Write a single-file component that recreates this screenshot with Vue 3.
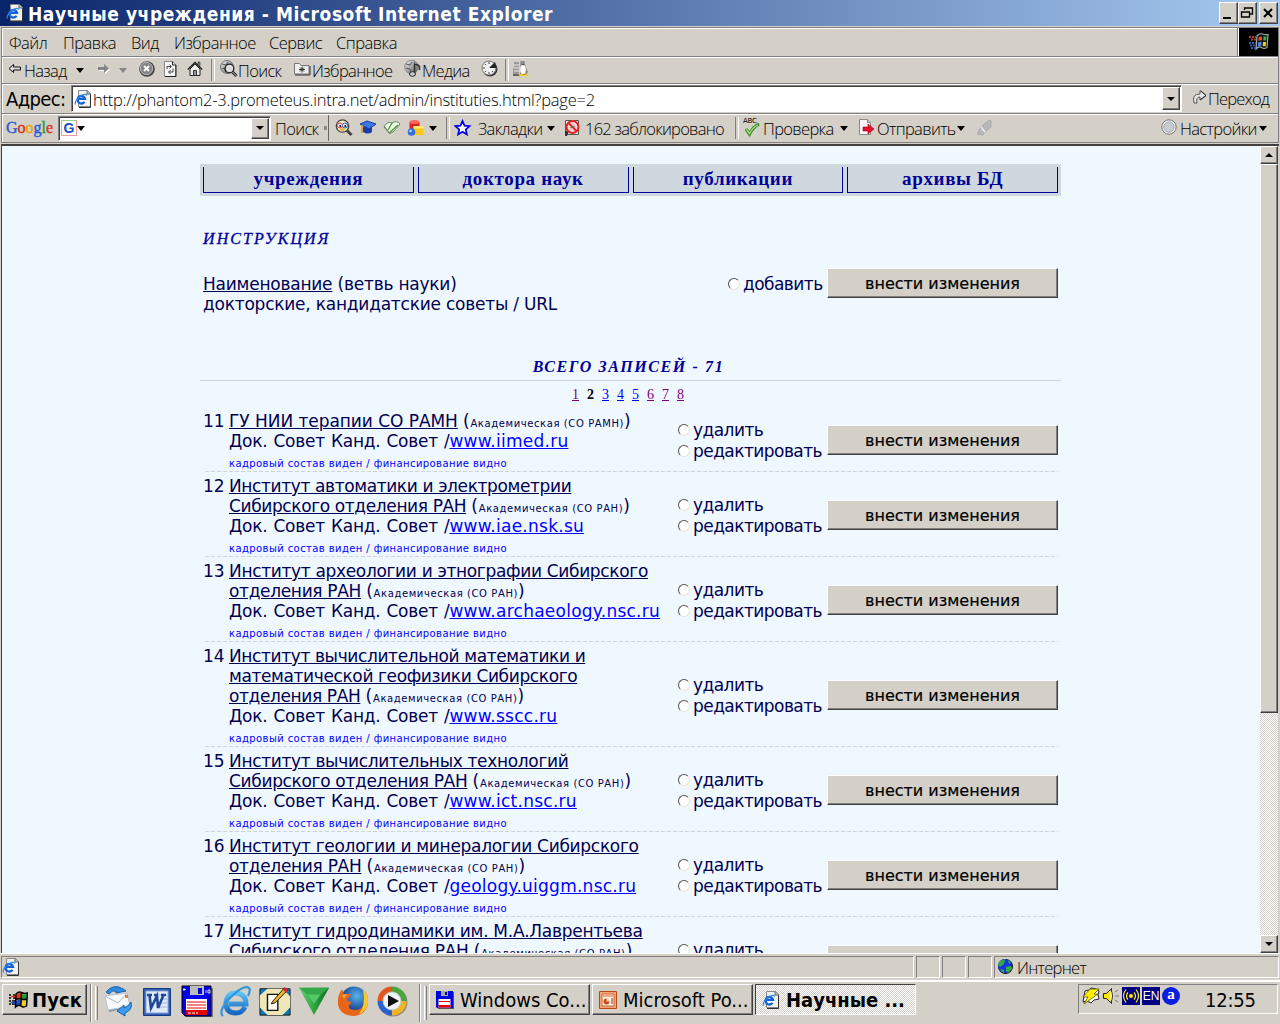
<template>
  <div class="screen">
    <svg class="defs" width="0" height="0">
      <linearGradient id="gball" x1="0" y1="0" x2="1" y2="1">
        <stop offset="0" stop-color="#f4f4f4"/><stop offset="1" stop-color="#555"/>
      </linearGradient>
      <linearGradient id="gblue" x1="0" y1="0" x2="0" y2="1">
        <stop offset="0" stop-color="#5fc4f5"/><stop offset="1" stop-color="#1668c0"/>
      </linearGradient>
      <linearGradient id="ggreen" x1="0" y1="0" x2="1" y2="0">
        <stop offset="0" stop-color="#6fd07a"/><stop offset=".5" stop-color="#2fa540"/><stop offset="1" stop-color="#0c6a1c"/>
      </linearGradient>
      <radialGradient id="gfox" cx=".6" cy=".35" r=".6">
        <stop offset="0" stop-color="#58b4ea"/><stop offset="1" stop-color="#143a8c"/>
      </radialGradient>
      <symbol id="page" viewBox="0 0 18 18">
        <path d="M4.500 .5h9l3 3v13h-12z" fill="#f3f3ee" stroke="#888"/>
        <path d="M16.500 4v13.500H5" fill="none" stroke="#333"/>
        <path d="M13 .5v3.500h3.500" fill="#bbb" stroke="#666"/>
        <path d="M10.500 11.800A3.800 3.800 0 1 1 11 8.800H4.500" fill="none" stroke="#1460d8" stroke-width="2.300"/>
        <path d="M1.500 14.500Q0 11.500 6 6.500Q11 3 13 5.500" fill="none" stroke="#2a86ee" stroke-width="1.200"/>
      </symbol>
      <symbol id="back" viewBox="0 0 14 14">
        <path d="M1 6.500L5.500 2.500V5h7v3h-7v2.500z" fill="#d9d9d9" stroke="#111"/>
      </symbol>
      <symbol id="forward" viewBox="0 0 14 14">
        <path d="M2 6h6V3l5 4.500L8 12V9H2z" fill="#fff"/>
        <path d="M1 5h6V2l5 4.500L7 11V8H1z" fill="#858585"/>
      </symbol>
      <symbol id="stop" viewBox="0 0 16 16">
        <circle cx="8" cy="8" r="7.800" fill="#444"/>
        <circle cx="7.500" cy="7.500" r="6.200" fill="#858585" stroke="#bbb"/>
        <path d="M5 5l5 5M10 5l-5 5" stroke="#fff" stroke-width="1.800"/>
      </symbol>
      <symbol id="refresh" viewBox="0 0 16 16">
        <path d="M1.500 .5h8l3 3v12h-11z" fill="#f6f6f6" stroke="#888"/>
        <path d="M13 4v11.500H2M9.500 .5V4H13" fill="none" stroke="#222"/>
        <path d="M4 8V5.500h4M6.500 3.500l2 2-2 2M10 7.500V11H6M7.500 9l-2 2 2 2" fill="none" stroke="#444"/>
      </symbol>
      <symbol id="home" viewBox="0 0 16 16">
        <path d="M3 8v6.500h10V8L8 3z" fill="#eee" stroke="#222"/>
        <path d="M.8 8.500L8 1.500l7.200 7" fill="none" stroke="#222" stroke-width="1.300"/>
        <path d="M11 1h2v4h-2z" fill="#888" stroke="#222" stroke-width=".6"/>
        <path d="M6.500 9.500h3v5h-3z" fill="#999" stroke="#333"/>
      </symbol>
      <symbol id="search" viewBox="0 0 18 18">
        <circle cx="7" cy="7" r="6.500" fill="url(#gball)" stroke="#777"/>
        <path d="M2 4l4 1 2-3M1.500 9l3-1 1 4" fill="none" stroke="#555"/>
        <circle cx="9.500" cy="8.500" r="4.300" fill="#ddd" stroke="#222" stroke-width="1.300"/>
        <path d="M12.500 12l4 4" stroke="#222" stroke-width="3"/>
        <path d="M12.500 12l4 4" stroke="#ccc" stroke-width="1"/>
      </symbol>
      <symbol id="fav" viewBox="0 0 18 16">
        <path d="M.5 2.500h5l1.500 2h8v8.500H.5z" fill="#efefef" stroke="#777"/>
        <path d="M1 14h15V5" fill="none" stroke="#333"/>
        <path d="M8 5.500v6M5 8.500h6M6 6.500l4 4M10 6.500l-4 4" stroke="#333"/>
      </symbol>
      <symbol id="media" viewBox="0 0 18 18">
        <circle cx="7.500" cy="7" r="6.800" fill="url(#gball)" stroke="#888"/>
        <path d="M2 4l4 1 2-3M2 8l4 1 1 4M10 2l1 3" fill="none" stroke="#555"/>
        <path d="M10.500 14V4.500Q14 4 15.500 6.500V10" fill="none" stroke="#333" stroke-width="1.500"/>
        <ellipse cx="8.500" cy="14" rx="3" ry="2.300" fill="#ccc" stroke="#222"/>
      </symbol>
      <symbol id="history" viewBox="0 0 18 18">
        <circle cx="9" cy="9" r="7.500" fill="#333"/>
        <circle cx="8" cy="8" r="7" fill="#eee" stroke="#777"/>
        <path d="M8 8l6-6 1.500 6z" fill="#222"/>
        <path d="M8 2v2M8 12v2M2 8h2M4 4l1 1M4 12l1-1M11 11l1 1" stroke="#444"/>
        <path d="M8 8l3 3" stroke="#fff" stroke-width="1.500"/>
      </symbol>
      <symbol id="penguin" viewBox="0 0 18 18">
        <path d="M2 2h5v12H1V8h1z" fill="#999"/>
        <path d="M2 5h5M2 8h5M2 11h5" stroke="#eee"/>
        <path d="M8.500 1h4l1 5 2.500 6-2 3H8V8z" fill="#8c8c8c"/>
        <ellipse cx="11" cy="9.500" rx="2.800" ry="4.500" fill="#fff"/>
        <path d="M1 14h5l3 2H1z" fill="#666"/>
        <path d="M8 14h3v2H7zM13 13l4 2-3 2z" fill="#f2cb00"/>
        <path d="M10 4h2v1h-2z" fill="#444"/>
      </symbol>
      <symbol id="go" viewBox="0 0 16 16">
        <path d="M2 14Q-.5 5 8 5V1.500L14 6.500L8 11V8Q3.500 8 5 14z" fill="#e6e6e6" stroke="#555"/>
        <path d="M8 11l6-4.500L9 2" fill="none" stroke="#222"/>
      </symbol>
      <symbol id="glass" viewBox="0 0 18 18">
        <circle cx="7.500" cy="7" r="6.200" fill="#f8efc8" stroke="#444" stroke-width="1.300"/>
        <circle cx="5" cy="6.500" r="2.500" fill="#fff" stroke="#d33"/>
        <circle cx="10" cy="6.500" r="2.500" fill="#fff" stroke="#2a52c9"/>
        <path d="M4.500 6h1.500v2H4.500zM9.500 6H11v2H9.500z" fill="#111"/>
        <path d="M5.500 10.500h4" stroke="#e5a600" stroke-width="2"/>
        <path d="M12 11.500l4.500 4.500" stroke="#444" stroke-width="3"/>
      </symbol>
      <symbol id="cap" viewBox="0 0 18 18">
        <path d="M4 8v5q5 3 9 0V8z" fill="#1740a8"/>
        <path d="M1 5l7-3 9 3-7 5z" fill="#3f76e6" stroke="#173c9c"/>
        <path d="M3 6v8" stroke="#e59517" stroke-width="1.600"/>
      </symbol>
      <symbol id="note" viewBox="0 0 18 18">
        <path d="M1 8Q4 2 9 4q5-3 8 1l-7 8q-2-1-3 2z" fill="#f3fbef" stroke="#5d8b52"/>
        <path d="M9 4L5 11M6 14l9-8" fill="none" stroke="#52a13c" stroke-width="1.500"/>
        <path d="M2 8l5 7" stroke="#777"/>
      </symbol>
      <symbol id="blocks" viewBox="0 0 17 18">
        <path d="M2 3q5-3 10 0v7H2z" fill="#e32020"/>
        <ellipse cx="7" cy="3" rx="5" ry="2" fill="#ff6a5a"/>
        <path d="M6 7h10v9H6z" fill="#f8c814"/><path d="M6 7h10v2.500H6z" fill="#ffee75"/>
        <circle cx="4" cy="13" r="3.800" fill="#2f6fe0"/><circle cx="3" cy="12" r="1.300" fill="#bcd6ff"/>
      </symbol>
      <symbol id="star" viewBox="0 0 18 18">
        <path d="M8.500 2l2 4.700 5 .4-3.800 3.400 1.200 5-4.400-2.700-4.400 2.700 1.200-5L1.500 7.100l5-.4z" fill="#fff" stroke="#0000e8" stroke-width="1.700"/>
      </symbol>
      <symbol id="popup" viewBox="0 0 18 18">
        <path d="M1.500 1.500h13v14h-13z" fill="#f4f4f4" stroke="#555"/>
        <path d="M1 12h4l-2 5H1z" fill="#333"/>
        <circle cx="8.500" cy="8" r="6" fill="#f6d8d8" stroke="#e02525" stroke-width="2"/>
        <path d="M4.500 4l8 8" stroke="#e02525" stroke-width="2"/>
        <path d="M6 9l5-2" stroke="#666"/>
      </symbol>
      <symbol id="check" viewBox="0 0 18 18">
        <path d="M3 10l3.500 5Q10 8 16 5" fill="none" stroke="#3c8c28" stroke-width="3.200"/>
        <path d="M3.500 10.500l3 4Q10 8 15 6" fill="none" stroke="#a5e08a" stroke-width="1.300"/>
      </symbol>
      <symbol id="send" viewBox="0 0 18 18">
        <path d="M1.500 .5h8l3 3v12h-11z" fill="#f8f8f8" stroke="#888"/>
        <path d="M9.500 .5v3h3" fill="#ccc" stroke="#888"/>
        <path d="M5 8h5V5l6 5-6 5v-3H5z" fill="#e3122f" stroke="#a30018" stroke-width=".6"/>
      </symbol>
      <symbol id="pen" viewBox="0 0 18 18">
        <path d="M1 15l4-7 4 4-2 4zM6 7l7-6 2 1v6l-6 5z" fill="#b8b8b8" stroke="#aaa"/>
        <path d="M5 8l4 5" stroke="#eee" stroke-width="1.500"/>
      </symbol>
      <symbol id="ball" viewBox="0 0 18 18">
        <circle cx="8" cy="8" r="7.200" fill="#f2f2f2" stroke="#777"/>
        <circle cx="8" cy="8" r="5.200" fill="#c8ccce" stroke="#aaa"/>
      </symbol>
      <symbol id="earth" viewBox="0 0 18 18">
        <circle cx="8.500" cy="8.500" r="7.500" fill="#111"/>
        <circle cx="8" cy="8" r="7" fill="#1a35e0"/>
        <path d="M3 3l5-2-1 5-4 3-2-2zM9 9l5-1 1 3-4 4-2-2zM11 2l3 2-2 2zM3 11l4 1v3q-3-1-4-4z" fill="#2fae43"/>
      </symbol>
      <symbol id="win" viewBox="0 0 20 18">
        <path d="M8 4q3-3 5.500-1.500L13 8q-3-1-5 1z" fill="#e8330c"/>
        <path d="M14 3q2 1 5 0l-.5 5q-2.500 1-5 0z" fill="#16a02c"/>
        <path d="M8 10q3-2 5-1l-.5 5.500q-2-1-5 1z" fill="#1d4fe0"/>
        <path d="M13.500 9q2 1 5 0l-.5 5.500q-3 1-5 0z" fill="#f6cf13"/>
        <path d="M8 3q3-3 5.500-1.500T19.500 2l-1 13q-3 2-5.500 0T7.500 16zM13.500 1.500l-.7 14M7.500 9q3-2 5.500-1t6 0" fill="none" stroke="#000" stroke-width="1.500"/>
        <path d="M1 4h2M1 7h2M1 10h2M1 13h2M5 4h2M5 7h2M4 10h3M4 13h3" stroke="#000" stroke-width="1.600"/>
        <path d="M3 5.500h4" stroke="#e8330c" stroke-width="1.500"/><path d="M3 11.500h4" stroke="#1d4fe0" stroke-width="1.500"/>
      </symbol>
      <symbol id="flag" viewBox="0 0 22 20">
        <path d="M9 4q3-3 5.500-2T20 2.500l-1 13q-3 2-5.500 0T8 17z" fill="#111" stroke="#9aa" stroke-width="1.200"/>
        <path d="M10.500 5.500q2-1.500 3.500-1v4q-2-.5-3.500.5z" fill="#ee4a25"/>
        <path d="M15.500 4.500h3l-.3 4h-2.900z" fill="#3fae45"/>
        <path d="M10 10.500q2-1 3.500-.7v4q-2-.3-3.700.7z" fill="#4a86e8"/>
        <path d="M15 10h3l-.3 4.200h-2.900z" fill="#f7d21c"/>
        <path d="M1 5h7M3 7.500h5" stroke="#a8452f" stroke-width="1.800" stroke-dasharray="2 1"/>
        <path d="M1 11h7M2 13.500h6M3 16h5" stroke="#2f58a8" stroke-width="1.800" stroke-dasharray="2 1"/>
      </symbol>
      <symbol id="mail" viewBox="0 0 32 32">
        <path d="M3 13l21-4 4 13-22 5z" fill="#8793a6"/>
        <path d="M2 11l22-3 3 13-22 4z" fill="#f8fafe" stroke="#b7c4d8"/>
        <path d="M2 11l13 7 9-10" fill="none" stroke="#a7b5cb"/>
        <path d="M22 10h3v3h-3z" fill="#e8803c"/>
        <path d="M3 7Q11-2 20 4l3 2-10 2 0-2Q9 5 6 9z" fill="#2f8de0" stroke="#1460b0"/>
        <path d="M28 17q2 8-6 11v3l-8-5 7-6v3q4-1 7-6z" fill="#3c9df0" stroke="#1460b0"/>
      </symbol>
      <symbol id="word" viewBox="0 0 32 32">
        <path d="M1.500 3.500h27v27h-27z" fill="#2f5eb2" stroke="#143a80"/>
        <path d="M4 6h22v22H4z" fill="#dfe9fa" stroke="#87a7dc"/>
        <path d="M17 10h8M19 14h6M19 18h6M17 22h8" stroke="#9cb6e2"/>
        <path d="M5 10h5M12 10h4M19 10h5M7.500 10l1.500 13 6-12 1 12 5.500-13" fill="none" stroke="#1f4795" stroke-width="2.600"/>
      </symbol>
      <symbol id="floppy" viewBox="0 0 32 32">
        <path d="M3 3h29v29H5z" fill="#777"/>
        <path d="M1 1h29v30H4l-3-3z" fill="#0000ee" stroke="#000"/>
        <path d="M9 1h14v9H9z" fill="#bdbdbd"/><path d="M17 3h4v6h-4z" fill="#0000d0"/>
        <path d="M5 14h21v16H5z" fill="#fff"/>
        <path d="M6 17h19M6 20h19M6 23h19" stroke="#e00" stroke-width="1"/>
        <path d="M5 25h21v5H5z" fill="#e00000"/><path d="M7 28h10" stroke="#fff" stroke-dasharray="3 1"/>
        <path d="M3 3v3M2 4.500h3M25 5v3M27 5v3h2V5z" fill="none" stroke="#fff" stroke-width=".8"/>
      </symbol>
      <symbol id="floppy-small" viewBox="0 0 18 18">
        <path d="M1 1h17v17H2z" fill="#555"/>
        <path d="M0 0h17v17H1l-1-1z" fill="#0000dd"/>
        <path d="M5 0h7v5H5z" fill="#a8a8a8"/><path d="M9 1h2v3H9z" fill="#0000b0"/>
        <path d="M2.500 8h12v8.500h-12z" fill="#fff"/>
        <path d="M3 10.500h11M2.500 14.500h12" stroke="#e00"/><path d="M2.500 14h12v2.500h-12z" fill="#e00"/>
      </symbol>
      <symbol id="ie" viewBox="0 0 32 32">
        <path d="M25 22Q22 28 16 28 6 28 6 18 7 8 16 8q10 1 10 11H9" fill="none" stroke="url(#gblue)" stroke-width="5"/>
        <path d="M3 31Q-2 27 8 15 20 2 27 2q5 1 1 9" fill="none" stroke="#3196dd" stroke-width="2.200"/>
      </symbol>
      <symbol id="desk" viewBox="0 0 34 32">
        <path d="M1 3h32v28H1z" fill="#0e7ab8" stroke="#111"/>
        <path d="M1 10L9 3h16l8 8v12l-8 8H9l-8-8z" fill="#efe7b8"/>
        <path d="M9 9h11v17H9z" fill="#fffdf0" stroke="#111" stroke-width="1.500"/>
        <path d="M14 17L27 2l3 3-13 13-4 1z" fill="#f4b81f" stroke="#111"/>
        <path d="M27 1l4 3-2 3-4-3z" fill="#d5263c"/>
      </symbol>
      <symbol id="tri" viewBox="0 0 34 32">
        <path d="M1 2h32L17 31z" fill="url(#ggreen)"/>
        <path d="M1 2h32l-9 7H10z" fill="#35a94a"/><path d="M10 9h14l-7 10z" fill="#55c868"/>
      </symbol>
      <symbol id="fox" viewBox="0 0 32 32">
        <circle cx="17" cy="15" r="13.500" fill="url(#gfox)"/>
        <path d="M26 4q6 6 5 14-2 12-14 13Q4 31 1 20 0 11 5 4l2 5 7 0-4 6 5 3q-5 2-2 6 9 3 13-3 5-8 0-17z" fill="#e8661a"/>
        <path d="M26 4q6 6 5 14-2 9-9 11 7-8 4-25z" fill="#f9c62c"/>
        <path d="M5 10l5-1-3 5z" fill="#f7a42e"/>
      </symbol>
      <symbol id="wmp" viewBox="0 0 32 32">
        <circle cx="17" cy="17" r="14.500" fill="#8a8a8a"/>
        <path d="M16 1.500A14.500 14.500 0 0 0 1.500 16H16z" fill="#e2551d"/>
        <path d="M16 1.500A14.500 14.500 0 0 1 30.500 16H16z" fill="#4ba53b"/>
        <path d="M1.500 16A14.500 14.500 0 0 0 16 30.500V16z" fill="#2b62cf"/>
        <path d="M30.500 16A14.500 14.500 0 0 1 16 30.500V16z" fill="#f2b51b"/>
        <circle cx="16" cy="16" r="9" fill="#f1f5f9" stroke="#bcc"/>
        <path d="M12 10l11 6-11 6z" fill="#111"/>
      </symbol>
      <symbol id="ppt" viewBox="0 0 18 18">
        <path d="M.5 .5h17v17H.5z" fill="#f5a57a" stroke="#b8481a"/>
        <path d="M3 3h12v12H3z" fill="#fff3ea" stroke="#d0602b"/>
        <path d="M4 5h10" stroke="#d0602b"/>
        <circle cx="7.500" cy="10.500" r="3" fill="#c9481a"/><path d="M7.500 10.500V7a3.500 3.500 0 0 1 3.500 3.500z" fill="#ffd2b5"/>
        <path d="M12 8h2M12 10h2M12 12h2" stroke="#802d0d"/>
      </symbol>
      <symbol id="bolt" viewBox="0 0 18 18">
        <path d="M2 9l1-5 4-1 2-2 5 1 3 2-1 4 1 4-5 1-3 3-4-2-4 1z" fill="#fff" stroke="#222"/>
        <path d="M8 2h9l-5 5h4L2 17l4-7H1z" fill="#ffee00" stroke="#5c5400" stroke-width=".8"/>
      </symbol>
      <symbol id="speaker" viewBox="0 0 18 18">
        <path d="M1.500 6.500h3l5-5v15l-5-5h-3z" fill="#ffe800" stroke="#222"/>
        <path d="M8.500 2q4 7 0 14" fill="#fff" stroke="#333"/>
        <path d="M13 5l3-2M13 9h4M13 13l3 2" stroke="#777"/>
      </symbol>
      <symbol id="radio-net" viewBox="0 0 18 18">
        <path d="M0 0h18v18H0z" fill="#000080"/>
        <circle cx="9" cy="9" r="2" fill="#ffee00"/>
        <path d="M6 5.500q-3 3.500 0 7M12 5.500q3 3.500 0 7M4 2.500q-5 6.500 0 13M14 2.500q5 6.500 0 13" fill="none" stroke="#ffee00" stroke-width="1.200"/>
      </symbol>
    </svg>

    <header class="title-bar">
      <svg class="i18"><use href="#page"/></svg>
      <span class="title-text">Научные учреждения - Microsoft Internet Explorer</span>
      <div class="win-buttons">
        <span class="win-btn"><svg viewBox="0 0 16 18"><path d="M3 15h8" stroke="#000" stroke-width="2"/></svg></span>
        <span class="win-btn"><svg viewBox="0 0 16 18"><path d="M5.500 7V5h8v6H11M5 5h9M2.500 9h8v5h-8zM2 9h9" fill="none" stroke="#000" stroke-width="1.300"/></svg></span>
        <span class="win-btn last"><svg viewBox="0 0 16 18"><path d="M4 6l8 8M12 6l-8 8" stroke="#000" stroke-width="2"/></svg></span>
      </div>
    </header>

    <nav class="bar menu">
      <span v-for="item in menu" class="slot" :style="{width: item.w + 'px'}">{{item.text}}</span>
      <span class="throbber"><svg><use href="#flag"/></svg></span>
    </nav>

    <div class="bar tools">
      <span v-for="part in tools" class="slot" :class="part.type" :style="{width: part.w + 'px'}">
        <svg v-if="part.icon" class="i18"><use :href="'#' + part.icon"/></svg>
        <template v-else>{{part.text}}</template>
      </span>
    </div>

    <div class="bar address">
      <span class="address-label">Адрес:</span>
      <div class="field url">
        <svg class="i18"><use href="#page"/></svg>
        <span class="url-text">http://phantom2-3.prometeus.intra.net/admin/instituties.html?page=2</span>
        <span class="drop"></span>
      </div>
      <span class="go"><svg class="i16"><use href="#go"/></svg>Переход</span>
    </div>

    <div class="bar google">
      <span class="logo"><b>G</b><b>o</b><b>o</b><b>g</b><b>l</b><b>e</b></span>
      <div class="field query">
        <span class="g-box">G</span>
        <span class="caret"></span>
        <span class="drop"></span>
      </div>
      <span v-for="part in google" class="slot" :class="part.type" :style="{width: part.w + 'px'}">
        <small v-if="part.icon === 'check'" class="abc">ABC</small>
        <svg v-if="part.icon" class="i18"><use :href="'#' + part.icon"/></svg>
        <template v-else>{{part.text}}</template>
      </span>
    </div>

    <div class="view">
      <main class="page">
        <div class="tabs">
          <a v-for="tab in tabs" class="tab">{{tab}}</a>
        </div>
        <h3 class="heading">ИНСТРУКЦИЯ</h3>
        <div class="row intro">
          <div class="intro-text"><u>Наименование</u> (ветвь науки)<br>докторские, кандидатские советы / URL</div>
          <div class="choices add">
            <label class="choice"><i class="radio"></i>добавить</label>
          </div>
          <button class="apply">внести изменения</button>
        </div>
        <h3 class="heading total">ВСЕГО ЗАПИСЕЙ - 71</h3>
        <div class="pages">
          <a v-for="n in 8" :class="{current: n === 2, seen: [1, 6, 7, 8].includes(n)}">{{n}}</a>
        </div>
        <div v-for="item in institutes" class="row record">
          <div class="num">{{item.id}}</div>
          <div class="info">
            <div v-for="(line, i) in item.lines" class="line">
              <u :style="{letterSpacing: item.spacing + 'px'}">{{line}}</u><template v-if="i === item.lines.length - 1"> (<small>Академическая ({{item.branch}})</small>)</template>
            </div>
            <div class="line councils">Док. Совет Канд. Совет /<a class="site">{{item.site}}</a></div>
            <div class="note">кадровый состав виден / финансирование видно</div>
          </div>
          <div class="choices">
            <label class="choice"><i class="radio"></i>удалить</label>
            <label class="choice"><i class="radio"></i>редактировать</label>
          </div>
          <button class="apply">внести изменения</button>
        </div>
      </main>
      <div class="scroll">
        <span class="scroll-btn up"></span>
        <span class="thumb"></span>
        <span class="scroll-btn down"></span>
      </div>
    </div>

    <div class="status">
      <span class="pane wide"><svg class="i18"><use href="#page"/></svg></span>
      <span class="pane"></span>
      <span class="pane"></span>
      <span class="pane"></span>
      <span class="pane zone"><svg class="i18"><use href="#earth"/></svg>Интернет</span>
    </div>

    <footer class="taskbar">
      <button class="start"><svg><use href="#win"/></svg>Пуск</button>
      <span class="grip"></span>
      <div class="quick">
        <svg v-for="name in quick"><use :href="'#' + name"/></svg>
      </div>
      <span class="grip"></span>
      <div class="tasks">
        <span v-for="task in tasks" class="task" :class="{active: task.active}">
          <svg class="i18"><use :href="'#' + task.icon"/></svg>{{task.name}}
        </span>
      </div>
      <div class="tray">
        <svg class="i18"><use href="#bolt"/></svg>
        <svg class="i18"><use href="#speaker"/></svg>
        <svg class="i18"><use href="#radio-net"/></svg>
        <span class="lang">EN</span>
        <span class="agent">a</span>
        <span class="clock">12:55</span>
      </div>
    </footer>
  </div>
</template>

<script setup>
const menu = [
  {text: 'Файл', w: 54},
  {text: 'Правка', w: 68},
  {text: 'Вид', w: 43},
  {text: 'Избранное', w: 95},
  {text: 'Сервис', w: 67},
  {text: 'Справка', w: 70},
]

// w is the width of the slot, up to the start of the next part
const tools = [
  {type: 'icon small', icon: 'back', w: 16},
  {type: 'text', text: 'Назад', w: 52},
  {type: 'caret-slot', w: 21},
  {type: 'icon small', icon: 'forward', w: 22},
  {type: 'caret-slot dim', w: 20},
  {type: 'icon mid', icon: 'stop', w: 24},
  {type: 'icon mid', icon: 'refresh', w: 24},
  {type: 'icon mid', icon: 'home', w: 24},
  {type: 'sep', w: 9},
  {type: 'icon', icon: 'search', w: 18},
  {type: 'text', text: 'Поиск', w: 56},
  {type: 'icon', icon: 'fav', w: 18},
  {type: 'text', text: 'Избранное', w: 92},
  {type: 'icon', icon: 'media', w: 18},
  {type: 'text', text: 'Медиа', w: 59},
  {type: 'icon', icon: 'history', w: 24},
  {type: 'sep', w: 7},
  {type: 'icon', icon: 'penguin', w: 18},
]

const google = [
  {type: 'text', text: 'Поиск', w: 49},
  {type: 'split', w: 11},
  {type: 'icon', icon: 'glass', w: 24},
  {type: 'icon', icon: 'cap', w: 24},
  {type: 'icon', icon: 'note', w: 24},
  {type: 'icon', icon: 'blocks', w: 22},
  {type: 'caret-slot', w: 17},
  {type: 'sep', w: 8},
  {type: 'icon', icon: 'star', w: 24},
  {type: 'text', text: 'Закладки', w: 69},
  {type: 'caret-slot', w: 17},
  {type: 'icon', icon: 'popup', w: 21},
  {type: 'text wide-text', text: '162 заблокировано', w: 150},
  {type: 'sep', w: 8},
  {type: 'icon', icon: 'check', w: 20},
  {type: 'text', text: 'Проверка', w: 77},
  {type: 'caret-slot', w: 18},
  {type: 'icon', icon: 'send', w: 19},
  {type: 'text', text: 'Отправить', w: 80},
  {type: 'caret-slot', w: 19},
  {type: 'icon', icon: 'pen', w: 185},
  {type: 'icon', icon: 'ball', w: 19},
  {type: 'text', text: 'Настройки', w: 79},
  {type: 'caret-slot', w: 10},
]

const tabs = ['учреждения', 'доктора наук', 'публикации', 'архивы БД']

const institutes = [
  {id: 11, spacing: -.05, lines: ['ГУ НИИ терапии СО РАМН'], branch: 'СО РАМН', site: 'www.iimed.ru'},
  {id: 12, spacing: -.38, lines: ['Институт автоматики и электрометрии', 'Сибирского отделения РАН'], branch: 'СО РАН', site: 'www.iae.nsk.su'},
  {id: 13, spacing: -.33, lines: ['Институт археологии и этнографии Сибирского', 'отделения РАН'], branch: 'СО РАН', site: 'www.archaeology.nsc.ru'},
  {id: 14, spacing: -.38, lines: ['Институт вычислительной математики и', 'математической геофизики Сибирского', 'отделения РАН'], branch: 'СО РАН', site: 'www.sscc.ru'},
  {id: 15, spacing: -.33, lines: ['Институт вычислительных технологий', 'Сибирского отделения РАН'], branch: 'СО РАН', site: 'www.ict.nsc.ru'},
  {id: 16, spacing: -.3, lines: ['Институт геологии и минералогии Сибирского', 'отделения РАН'], branch: 'СО РАН', site: 'geology.uiggm.nsc.ru'},
  {id: 17, spacing: -.28, lines: ['Институт гидродинамики им. М.А.Лаврентьева', 'Сибирского отделения РАН'], branch: 'СО РАН', site: 'www.hydro.nsc.ru'},
]

const quick = ['mail', 'word', 'floppy', 'ie', 'desk', 'tri', 'fox', 'wmp']

const tasks = [
  {name: 'Windows Co...', icon: 'floppy-small'},
  {name: 'Microsoft Po...', icon: 'ppt'},
  {name: 'Научные ...', icon: 'page', active: true},
]
</script>

<style>
body {
  background: #d4d0c8;
  overflow: hidden;
}
</style>

<style scoped>
* {
  box-sizing: border-box;
}

.screen {
  width: 1280px;
  height: 1024px;
  display: flex;
  flex-direction: column;
  overflow: hidden;
  background: #d4d0c8;
  color: #000;
  font-family: "Open Sans", "DejaVu Sans Condensed", sans-serif;
  font-size: 16.5px;
}

.defs {
  position: absolute;
}

svg {
  flex: none;
  display: block;
}

.i18 {
  width: 18px;
  height: 18px;
}

.i16 {
  width: 16px;
  height: 16px;
}

.title-bar {
  height: 26px;
  flex: none;
  display: flex;
  align-items: center;
  padding: 0 2px 0 6px;
  background: linear-gradient(90deg, #0a246a, #a6caf0);
  color: #fff;
}

.title-text {
  margin: 1px 0 0 4px;
  font: bold 19px "DejaVu Sans Condensed", sans-serif;
  letter-spacing: .55px;
  white-space: nowrap;
}

.win-buttons {
  display: flex;
  margin-left: auto;
}

.win-btn {
  width: 19px;
  height: 22px;
  background: #d4d0c8;
  border: 1px solid;
  border-color: #fff #404040 #404040 #fff;
  box-shadow: inset -1px -1px #808080;
}

.win-btn svg {
  width: 16px;
  height: 18px;
}

.win-btn.last {
  margin-left: 2px;
}

.bar {
  flex: none;
  display: flex;
  align-items: center;
  margin: 0 1px;
  border: 1px solid #808080;
  border-top: 0;
  box-shadow: inset 1px 1px #fff;
  font-weight: 300;
  letter-spacing: -.65px;
  white-space: nowrap;
}

.slot {
  flex: none;
  display: flex;
  align-items: center;
}

.menu {
  height: 30px;
  margin-top: 1px;
  border-top: 1px solid #808080;
  padding-left: 7px;
  letter-spacing: -.5px;
}

.throbber {
  width: 39px;
  height: 28px;
  margin-left: auto;
  display: flex;
  align-items: center;
  justify-content: center;
  background: #000;
  box-shadow: -1px 0 #fff, -2px 0 #808080;
}

.throbber svg {
  width: 22px;
  height: 20px;
}

.tools {
  height: 27px;
  padding-left: 6px;
}

.tools .small svg {
  width: 14px;
  height: 14px;
}

.tools .mid svg {
  width: 16px;
  height: 16px;
}

.tools .icon {
  padding-bottom: 2px;
}

.caret-slot::before,
.caret {
  content: "";
  border: 4.500px solid transparent;
  border-top: 5px solid #000;
  border-bottom: 0;
}

.dim::before {
  border-top-color: #858585;
}

.sep::before {
  content: "";
  width: 2px;
  height: 22px;
  border-left: 1px solid #808080;
  border-right: 1px solid #fff;
}

.split::before {
  content: "";
  width: 4px;
  height: 26px;
  background: radial-gradient(circle at 1px 13px, #888 2px, transparent 2.500px);
  border-right: 1px solid #666;
}

.wide-text {
  letter-spacing: -.75px;
}

.address {
  height: 30px;
  padding-left: 4px;
}

.address-label {
  width: 65px;
  font: 20px "DejaVu Sans Condensed", sans-serif;
}

.field {
  display: flex;
  align-items: center;
  background: #fff;
  border: 1px solid;
  border-color: #808080 #fff #fff #808080;
  box-shadow: inset 1px 1px #404040;
}

.url {
  width: 1111px;
  height: 27px;
  padding: 0 1px 0 2px;
}

.url-text {
  margin: 1px 0 0 1px;
  letter-spacing: -.25px;
}

.drop {
  width: 18px;
  align-self: stretch;
  margin: 1px 0 1px auto;
  display: flex;
  align-items: center;
  justify-content: center;
  background: #d4d0c8;
  border: 1px solid;
  border-color: #fff #404040 #404040 #fff;
  box-shadow: inset -1px -1px #808080;
}

.drop::before {
  content: "";
  border: 4px solid transparent;
  border-top: 4px solid #000;
  border-bottom: 0;
}

.go {
  display: flex;
  align-items: center;
  margin-left: 10px;
  letter-spacing: -.8px;
}

.go svg {
  margin-bottom: 4px;
}

.google {
  height: 29px;
  padding-left: 4px;
}

.logo {
  width: 52px;
  font: 16px "Liberation Serif", serif;
  letter-spacing: 0;
}

.logo b {
  font-weight: 400;
  -webkit-text-stroke: .4px;
}

.logo b:nth-child(1), .logo b:nth-child(4) {
  color: #2a5bd7;
}

.logo b:nth-child(2), .logo b:nth-child(6) {
  color: #d8331f;
}

.logo b:nth-child(3) {
  color: #e5a800;
}

.logo b:nth-child(5) {
  color: #259a3b;
}

.query {
  width: 213px;
  height: 25px;
  padding: 0 1px 0 2px;
  margin-right: 4px;
}

.g-box {
  width: 16px;
  height: 16px;
  display: flex;
  align-items: center;
  justify-content: center;
  border: 1px solid #8fd18f;
  border-color: #8fd18f #e99 #e99 #9bb5ee;
  color: #1d4bc4;
  font: bold 14px "Liberation Sans", sans-serif;
  letter-spacing: 0;
}

.abc {
  width: 0;
  margin-top: -15px;
  font: 7px "DejaVu Sans", sans-serif;
  letter-spacing: -.2px;
}

.view {
  height: 809px;
  flex: none;
  display: flex;
  margin: 1px 1px 0;
  border-top: 2px solid #404040;
  border-left: 1px solid #404040;
  overflow: hidden;
}

.page {
  width: 1258px;
  height: 807px;
  overflow: hidden;
  padding: 18px 199px 0 198px;
  background: #f0f8ff;
  color: #000050;
  font: 17px/20px "DejaVu Sans", sans-serif;
  letter-spacing: -.23px;
}

.tabs {
  height: 32px;
  display: grid;
  grid-template-columns: repeat(4, 1fr);
  gap: 4px;
  padding: 3px;
  background: #d0d8df;
}

.tab {
  border: 1px solid #000099;
  border-top: 0;
  color: #000099;
  font: bold 19px/23px "Liberation Serif", serif;
  letter-spacing: .65px;
  text-align: center;
}

.heading {
  margin: 33px 3px 0;
  color: #000099;
  font: italic 16px/20px "Liberation Serif", serif;
  letter-spacing: 2.100px;
  -webkit-text-stroke: .3px;
}

.row {
  display: flex;
  align-items: center;
  padding: 0 3px;
}

.intro {
  height: 60px;
  margin-top: 14px;
  align-items: flex-start;
}

.intro-text {
  flex: 1;
  padding-top: 11px;
}

.intro .choices {
  padding-top: 10px;
}

.intro .apply {
  margin-top: 5px;
}

.total {
  margin: 34px 0 0;
  padding: 0 4px 3px 0;
  border-bottom: 1px solid #ccd4dc;
  font-weight: bold;
  letter-spacing: 1.600px;
  text-align: center;
  -webkit-text-stroke: 0;
}

.pages {
  height: 30px;
  display: flex;
  justify-content: center;
  gap: 8px;
  padding: 5px 5px 0 0;
  font: 14px/18px "Liberation Serif", serif;
  letter-spacing: 0;
}

.pages a {
  color: #0000ff;
  text-decoration: underline;
}

.pages .seen {
  color: #800080;
}

.pages .current {
  color: #000;
  font-weight: bold;
  text-decoration: none;
}

.record {
  position: relative;
  margin-bottom: 4px;
  padding-bottom: 1px;
}

.record::after {
  content: "";
  position: absolute;
  left: 5px;
  right: 3px;
  bottom: 0;
  height: 1px;
  background: repeating-linear-gradient(90deg, #ccd4dc 0 4px, transparent 4px 6px);
}

.record .choices,
.record .apply {
  margin-bottom: 2px;
}

.num {
  width: 26px;
  align-self: flex-start;
  letter-spacing: 0;
}

.info {
  flex: 1;
}

.line {
  height: 20px;
  white-space: nowrap;
}

.line small {
  margin-left: 1px;
  font-size: 10px;
  letter-spacing: .6px;
}

.councils {
  word-spacing: .8px;
}

.site {
  color: #0000ff;
  letter-spacing: .25px;
  text-decoration: underline;
}

.note {
  height: 20px;
  padding-top: 3px;
  color: #0000ff;
  font-size: 10px;
  letter-spacing: .41px;
}

.choices {
  width: 149px;
  letter-spacing: -.55px;
  white-space: nowrap;
}

.choices.add {
  width: 99px;
}

.choice {
  height: 21px;
  display: flex;
  align-items: center;
}

.radio {
  width: 12px;
  height: 12px;
  margin-right: 3px;
  border: 1.500px solid;
  border-color: #505050 #e8e4dc #e8e4dc #505050;
  border-radius: 50%;
  background: #fff;
}

.apply {
  width: 231px;
  height: 30px;
  padding: 0;
  background: #d4d0c8;
  border: 1px solid;
  border-color: #fff #404040 #404040 #fff;
  box-shadow: inset -1px -1px #808080;
  color: #000;
  font: 16px "DejaVu Sans", sans-serif;
  -webkit-text-stroke: .2px;
}

.scroll {
  width: 18px;
  display: flex;
  flex-direction: column;
  background: conic-gradient(#fff 25%, #d4d0c8 0 50%, #fff 0 75%, #d4d0c8 0) 0 0 / 2px 2px;
}

.scroll-btn,
.thumb {
  flex: none;
  height: 18px;
  display: flex;
  align-items: center;
  justify-content: center;
  background: #d4d0c8;
  border: 1px solid;
  border-color: #fff #404040 #404040 #fff;
  box-shadow: inset -1px -1px #808080;
}

.scroll-btn::before {
  content: "";
  border: 4px solid transparent;
}

.up::before {
  border-bottom-color: #000;
  border-top: 0;
}

.down::before {
  border-top-color: #000;
  border-bottom: 0;
}

.thumb {
  height: 549px;
}

.down {
  margin-top: auto;
}

.status {
  height: 28px;
  flex: none;
  display: flex;
  gap: 2px;
  padding: 2px 1px 2px;
  border-top: 1px solid #fff;
  border-bottom: 1px solid #fff;
}

.pane {
  width: 24px;
  display: flex;
  align-items: center;
  border: 1px solid;
  border-color: #808080 #fff #fff #808080;
  font-weight: 300;
  letter-spacing: -.7px;
}

.wide {
  width: 913px;
}

.zone {
  flex: 1;
  gap: 2px;
  padding-left: 2px;
}

.taskbar {
  flex: 1;
  display: flex;
  align-items: flex-start;
  padding: 2px 2px 0;
  border-top: 1px solid #fff;
  font: 20px "DejaVu Sans Condensed", sans-serif;
}

.start {
  width: 85px;
  height: 31px;
  display: flex;
  align-items: center;
  gap: 4px;
  padding: 0 0 0 5px;
  background: #d4d0c8;
  border: 1px solid;
  border-color: #fff #404040 #404040 #fff;
  box-shadow: inset -1px -1px #808080;
  color: #000;
  font: bold 20px "DejaVu Sans Condensed", sans-serif;
  letter-spacing: .1px;
}

.start svg {
  width: 20px;
  height: 18px;
}

.grip {
  width: 8px;
  height: 38px;
  margin: 0 0 0 3px;
  border-left: 1px solid #808080;
  box-shadow: inset 1px 0 #fff;
  background: linear-gradient(#fff, #fff) 4px 2px / 1px 34px no-repeat, linear-gradient(#808080, #808080) 6px 2px / 1px 34px no-repeat;
}

.quick {
  width: 318px;
  display: flex;
  gap: 7px;
  padding: 1px 0 0 5px;
}

.quick svg {
  width: 32px;
  height: 32px;
}

.tasks {
  display: flex;
  gap: 2px;
  margin-left: 2px;
}

.task {
  width: 161px;
  height: 31px;
  display: flex;
  align-items: center;
  gap: 6px;
  padding-left: 6px;
  border: 1px solid;
  border-color: #fff #404040 #404040 #fff;
  box-shadow: inset -1px -1px #808080;
  white-space: nowrap;
}

.task.active {
  border-color: #404040 #fff #fff #404040;
  box-shadow: none;
  background: conic-gradient(#fff 25%, #d4d0c8 0 50%, #fff 0 75%, #d4d0c8 0) 0 0 / 2px 2px;
  font-weight: bold;
}

.tray {
  width: 200px;
  height: 30px;
  display: flex;
  gap: 2px;
  margin-left: auto;
  padding: 2px 0 0 3px;
  border: 1px solid;
  border-color: #808080 #fff #fff #808080;
}

.lang,
.agent {
  width: 18px;
  height: 18px;
  background: #000080;
  color: #fff;
  font: 12px/18px "Liberation Sans", sans-serif;
  text-align: center;
}

.agent {
  border-radius: 50%;
  background: #0a1ee0;
  font: bold 15px/15px "Liberation Serif", serif;
}

.clock {
  margin: 0 0 0 23px;
  line-height: 26px;
  letter-spacing: -.2px;
}
</style>
